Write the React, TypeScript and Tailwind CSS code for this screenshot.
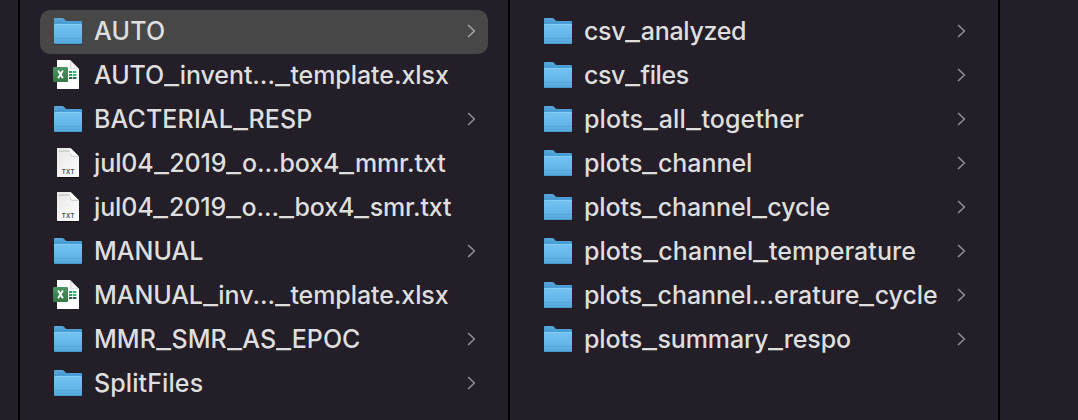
import { Fragment } from 'react';

type Kind = 'folder' | 'xlsx' | 'txt';
type Entry = { name: string; kind: Kind; selected?: boolean; tracking: string };

const left: Entry[] = [
  { name: 'AUTO', kind: 'folder', selected: true, tracking: 'tracking-[0.25px]' },
  { name: 'AUTO_invent..._template.xlsx', kind: 'xlsx', tracking: 'tracking-[-0.07px]' },
  { name: 'BACTERIAL_RESP', kind: 'folder', tracking: 'tracking-[0.12px]' },
  { name: 'jul04_2019_o...box4_mmr.txt', kind: 'txt', tracking: 'tracking-[-0.1px]' },
  { name: 'jul04_2019_o..._box4_smr.txt', kind: 'txt', tracking: 'tracking-[-0.14px]' },
  { name: 'MANUAL', kind: 'folder', tracking: 'tracking-[0px]' },
  { name: 'MANUAL_inv..._template.xlsx', kind: 'xlsx', tracking: 'tracking-[-0.08px]' },
  { name: 'MMR_SMR_AS_EPOC', kind: 'folder', tracking: 'tracking-[0.05px]' },
  { name: 'SplitFiles', kind: 'folder', tracking: 'tracking-[0.1px]' },
];

const right: Entry[] = [
  { name: 'csv_analyzed', kind: 'folder', tracking: 'tracking-[-0.32px]' },
  { name: 'csv_files', kind: 'folder', tracking: 'tracking-[-0.4px]' },
  { name: 'plots_all_together', kind: 'folder', tracking: 'tracking-[0.12px]' },
  { name: 'plots_channel', kind: 'folder', tracking: 'tracking-[-0.04px]' },
  { name: 'plots_channel_cycle', kind: 'folder', tracking: 'tracking-[-0.09px]' },
  { name: 'plots_channel_temperature', kind: 'folder', tracking: 'tracking-[0.05px]' },
  { name: 'plots_channel...erature_cycle', kind: 'folder', tracking: 'tracking-[-0.1px]' },
  { name: 'plots_summary_respo', kind: 'folder', tracking: 'tracking-[-0.12px]' },
];

function FolderIcon() {
  return (
    <svg width="32" height="32" viewBox="0 2 32 32" className="shrink-0">
      <path d="M2 8V30H30V8Z" fill="#15121a" opacity=".6" transform="translate(0 .7)" />
      <path d="M2 5Q2 4 3 4H10.2Q11.3 4 12 4.8L13.2 6.2Q13.8 7 15 7H29Q30 7 30 8V14H2Z" fill="url(#tab)" />
      <path d="M2 10.6Q2 10 3 10H29Q30 10 30 10.6V29Q30 30 29 30H3Q2 30 2 29Z" fill="url(#body)" />
      <path d="M2.5 10.4H29.5" stroke="#8bd0f6" strokeWidth=".8" />
      <path d="M2 24.5H30M2 27.5H30" stroke="#4c9ed2" strokeWidth=".6" />
      <path d="M2.3 29.6H29.7" stroke="#468dbd" strokeWidth=".8" />
    </svg>
  );
}

function XlsxIcon() {
  return (
    <svg width="32" height="32" viewBox="0 2 32 32" className="shrink-0">
      <path d="M5 2H18L27 11V31H5Z" fill="#fff" />
      <path d="M18 2L27 11H18.8Q18 11 18 10Z" fill="#dedede" />
      <path d="M19.5 4.5L25 10H19.5Z" fill="#f6f6f6" />
      <path d="M17 13h3.3v2H17zM17 16h3.3v2H17z" fill="#2e9c69" />
      <path d="M21 13h3.4v2H21zM21 16h3.4v2H21z" fill="#35b878" />
      <path d="M17 19h3.3v2H17zM21 19h3.4v2H21z" fill="#1f6446" />
      <rect x="1" y="9" width="15" height="15" rx="1" fill="url(#excel)" />
      <path d="M6.1 12.5L10.9 20.3M10.9 12.5L6.1 20.3" stroke="#fff" strokeWidth="1.8" />
    </svg>
  );
}

function TxtIcon() {
  return (
    <svg width="32" height="32" viewBox="0 2 32 32" className="shrink-0">
      <path d="M5 3H19L27 11V32H5Z" fill="#09080b" opacity=".65" />
      <path d="M5 2H18.5L27 10.5V31H5Z" fill="url(#paper)" />
      <path d="M18.5 2L27 10.5H20Q18.5 10.5 18.5 9Z" fill="#fff" />
      <path d="M18.7 7V9Q18.7 10.3 20 10.3H26.5" fill="none" stroke="#bcbcbc" strokeWidth=".8" />
      <path d="M7 5.2H17.5" stroke="#b8b8b8" strokeWidth="1.2" strokeDasharray="1.4 .5" />
      <text x="16.2" y="28" textAnchor="middle" fontSize="6" fontWeight="600" fill="#484848" letterSpacing=".35" fontFamily="Inter, sans-serif">TXT</text>
    </svg>
  );
}

function FileName({ name }: { name: string }) {
  return name.split('_').map((part, i) => (
    <Fragment key={i}>
      {i > 0 && <span className="inline-block w-[15.5px] origin-left scale-x-[1.3] tracking-normal">_</span>}
      {part}
    </Fragment>
  ));
}

function Row({ entry }: { entry: Entry }) {
  return (
    <div className={`flex h-11 items-center rounded-[10px] pr-3 pl-3 ${entry.selected ? 'bg-[#474747]' : ''}`}>
      {entry.kind === 'folder' ? <FolderIcon /> : entry.kind === 'xlsx' ? <XlsxIcon /> : <TxtIcon />}
      <div className="ml-[10px] grow pb-[2px] text-[25px] leading-[42px] font-[450] whitespace-nowrap text-[#dfdedf]">
        <span className={entry.tracking}><FileName name={entry.name} /></span>
      </div>
      {entry.kind === 'folder' && (
        <svg width="9" height="14" viewBox="0 0 9 14" className={`mb-[2px] shrink-0 ${entry.selected ? 'text-[#a5a5a5]' : 'text-[#8e8b91]'}`}>
          <path d="M1.6 1.5L7.4 7L1.6 12.5" fill="none" stroke="currentColor" strokeWidth="1.7" strokeLinecap="round" strokeLinejoin="round" />
        </svg>
      )}
    </div>
  );
}

export default function App() {
  return (
    <div className="flex h-[420px] w-[1078px] overflow-hidden bg-[#231e27] font-['Inter',sans-serif]">
      <svg width="0" height="0" className="absolute">
        <defs>
          <linearGradient id="tab" x1="0" y1="0" x2="0" y2="1"><stop stopColor="#57a9dd" /><stop offset="1" stopColor="#398bc9" /></linearGradient>
          <linearGradient id="body" x1="0" y1="0" x2="0" y2="1"><stop stopColor="#74c4f2" /><stop offset="1" stopColor="#56acdf" /></linearGradient>
          <linearGradient id="excel" x1="0" y1="0" x2="0" y2="1"><stop stopColor="#4b9463" /><stop offset="1" stopColor="#347843" /></linearGradient>
          <linearGradient id="paper" x1="0" y1="0" x2="1" y2="1"><stop stopColor="#e7e7e7" /><stop offset="1" stopColor="#fff" /></linearGradient>
        </defs>
      </svg>
      <div className="w-5 shrink-0 border-r-2 border-black" />
      <div className="w-[490px] shrink-0 border-r-2 border-black pt-[10px] pr-5 pl-5">
        {left.map((entry) => <Row key={entry.name} entry={entry} />)}
      </div>
      <div className="w-[490px] shrink-0 border-r-2 border-black pt-[10px] pr-5 pl-5">
        {right.map((entry) => <Row key={entry.name} entry={entry} />)}
      </div>
    </div>
  );
}
